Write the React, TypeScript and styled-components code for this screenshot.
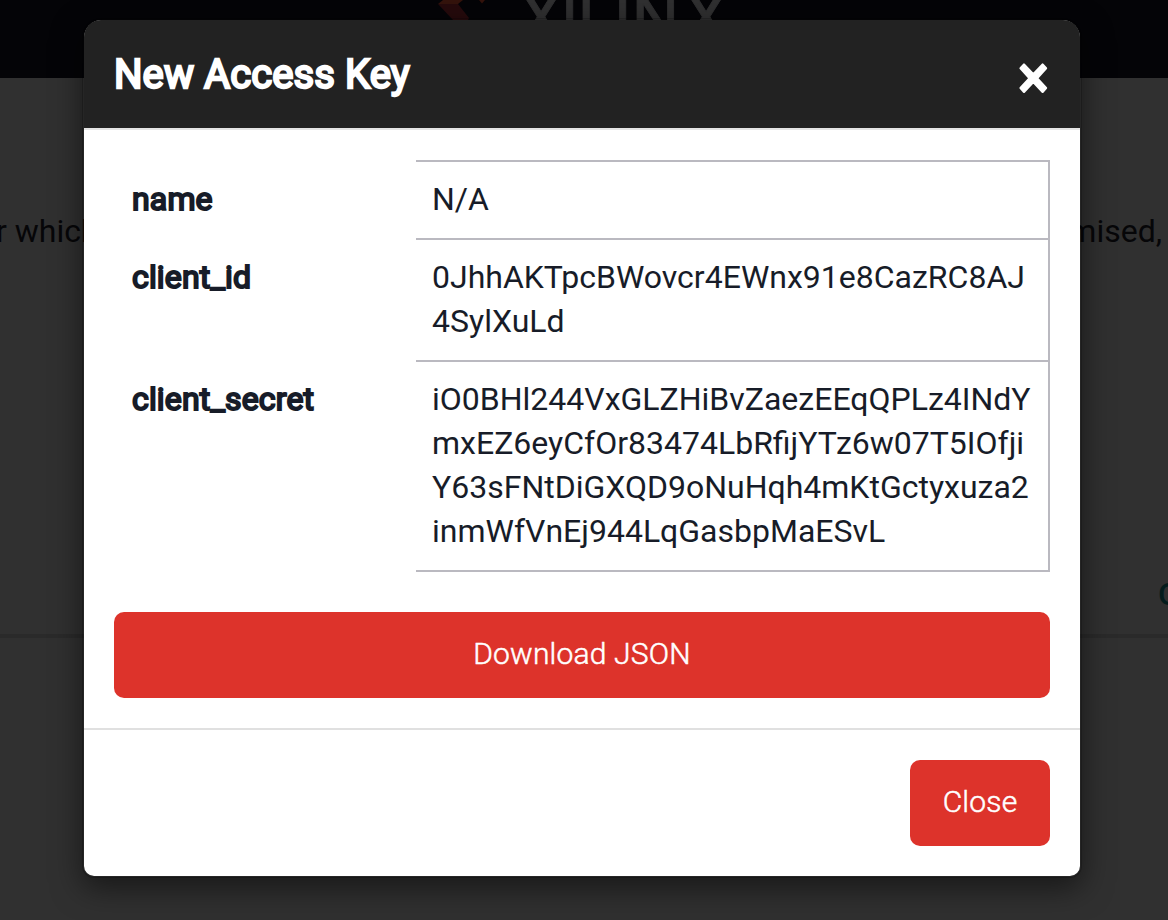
import React from "react";
import styled, { createGlobalStyle } from "styled-components";

const GlobalStyle = createGlobalStyle`
  html, body { margin: 0; height: 100%; overflow: hidden; background: #303030; }
  body { font-family: Roboto, "Liberation Sans", sans-serif; color: #171c28; }
  *, *::before, *::after { box-sizing: border-box; }
`;

const Screen = styled.div`
  position: relative;
  width: 1168px;
  height: 920px;
  overflow: hidden;
  background: #303030;
`;

const Backdrop = styled.div`
  height: 100%;
  display: flex;
  flex-direction: column;
`;

const TopBar = styled.header`
  flex: none;
  height: 78px;
  padding-left: 430px;
  background: #040407;
`;

const Logo = styled.svg`
  display: block;
  width: 300px;
  height: 78px;
`;

const Intro = styled.section`
  flex: none;
  height: 560px;
  padding-top: 131px;
  border-bottom: 4px solid #2a2a2a;
  display: flex;
  flex-direction: column;
  justify-content: space-between;
`;

const IntroLine = styled.div`
  display: flex;
  justify-content: space-between;
  font-size: 32px;
  line-height: 44px;
  color: #060608;
  padding-right: 6px;
  margin-left: -4px;
`;

const ActionLine = styled.div`
  padding-left: 1158px;
  padding-bottom: 18px;
  font-size: 32px;
  line-height: 44px;
  white-space: nowrap;
  font-weight: 500;
  color: #041c1c;
`;

const Dialog = styled.div`
  position: absolute;
  top: 18px;
  left: 82px;
  width: 1000px;
  border: 2px solid rgba(0, 0, 0, 0.2);
  border-radius: 20px 20px 12px 12px;
  background: #fff;
  background-clip: padding-box;
  box-shadow: 0 10px 30px rgba(0, 0, 0, 0.5);
`;

const DialogHeader = styled.div`
  display: flex;
  justify-content: space-between;
  height: 110px;
  padding: 33px 31px 0 30px;
  background: #222;
  border-bottom: 2px solid #e5e5e5;
  border-radius: 17px 17px 0 0;
  color: #fff;
`;

const Title = styled.h4`
  margin: 0;
  font-size: 40px;
  line-height: 44px;
  font-weight: 400;
  letter-spacing: 0.08px;
  -webkit-text-stroke: 2.3px currentColor;
`;

const CloseIcon = styled.svg`
  display: block;
  width: 30px;
  height: 32px;
  margin-top: 9px;
`;

const DialogBody = styled.div`
  padding: 30px;
`;

const KeyTable = styled.dl`
  display: grid;
  grid-template-columns: 302px 634px;
  margin: 0 0 40px;
  font-size: 32px;
  line-height: 44px;
`;

const Term = styled.dt`
  padding: 17px 18px;
  letter-spacing: 0.16px;
  -webkit-text-stroke: 2px currentColor;
`;

const Value = styled.dd<{ $last?: boolean }>`
  margin: 0;
  padding: 15px 16px 17px;
  border: solid #bab9c0;
  border-width: 2px 2px ${(p) => (p.$last ? 2 : 0)}px 0;
  word-break: break-all;
`;

const Button = styled.button<{ $wide?: boolean }>`
  display: block;
  width: ${(p) => (p.$wide ? "100%" : "140px")};
  height: 86px;
  padding: 0 0 2px;
  border: 0;
  border-radius: 10px;
  background: #dd332b;
  color: #fff;
  font: 300 30px/44px Roboto, "Liberation Sans", sans-serif;
  letter-spacing: 0.18px;
  -webkit-text-stroke: 0.5px currentColor;
`;

const DialogFooter = styled.div`
  display: flex;
  justify-content: flex-end;
  padding: 30px;
  border-top: 2px solid #e0e0e0;
`;

export default function App() {
  return (
    <Screen>
      <GlobalStyle />
      <Backdrop>
        <TopBar>
          <Logo viewBox="430 0 300 78">
            <path d="M443 0H463L458 4H438Z" fill="#34130c" />
            <path d="M438 4H458L469 18L468 20V40H440L453 20Z" fill="#260a0c" />
            <path d="M479 0H485L482 3.500Z" fill="#34130c" />
            <text
              x="520 560.500 577.500 613.500 631.500 685"
              y="41"
              fill="#303031"
              stroke="#303031"
              strokeWidth="0.8"
              fontFamily="Roboto"
              fontSize="67"
            >
              XILINX
            </text>
          </Logo>
        </TopBar>
        <Intro>
          <IntroLine>
            <span>r which</span>
            <span>mised,</span>
          </IntroLine>
          <ActionLine>O</ActionLine>
        </Intro>
      </Backdrop>
      <Dialog role="dialog">
        <DialogHeader>
          <Title>New Access Key</Title>
          <CloseIcon viewBox="0 0 30 32">
            <path
              d="M1.500 6.300L5 2.500L14.300 12.300L23.600 2.500L27.100 6.300L18.100 16.200L27.100 26.100L23.600 29.900L14.300 20.100L5 29.900L1.500 26.100L10.500 16.200Z"
              fill="#fff"
              stroke="#fff"
              strokeWidth="2.200"
              strokeLinejoin="round"
            />
          </CloseIcon>
        </DialogHeader>
        <DialogBody>
          <KeyTable>
            <Term>name</Term>
            <Value>N/A</Value>
            <Term>client_id</Term>
            <Value>0JhhAKTpcBWovcr4EWnx91e8CazRC8AJ4SylXuLd</Value>
            <Term>client_secret</Term>
            <Value $last>
              iO0BHl244VxGLZHiBvZaezEEqQPLz4INdYmxEZ6eyCfOr83474LbRfijYTz6w07T5IOfjiY63sFNtDiGXQD9oNuHqh4mKtGctyxuza2inmWfVnEj944LqGasbpMaESvL
            </Value>
          </KeyTable>
          <Button $wide>Download JSON</Button>
        </DialogBody>
        <DialogFooter>
          <Button>Close</Button>
        </DialogFooter>
      </Dialog>
    </Screen>
  );
}
